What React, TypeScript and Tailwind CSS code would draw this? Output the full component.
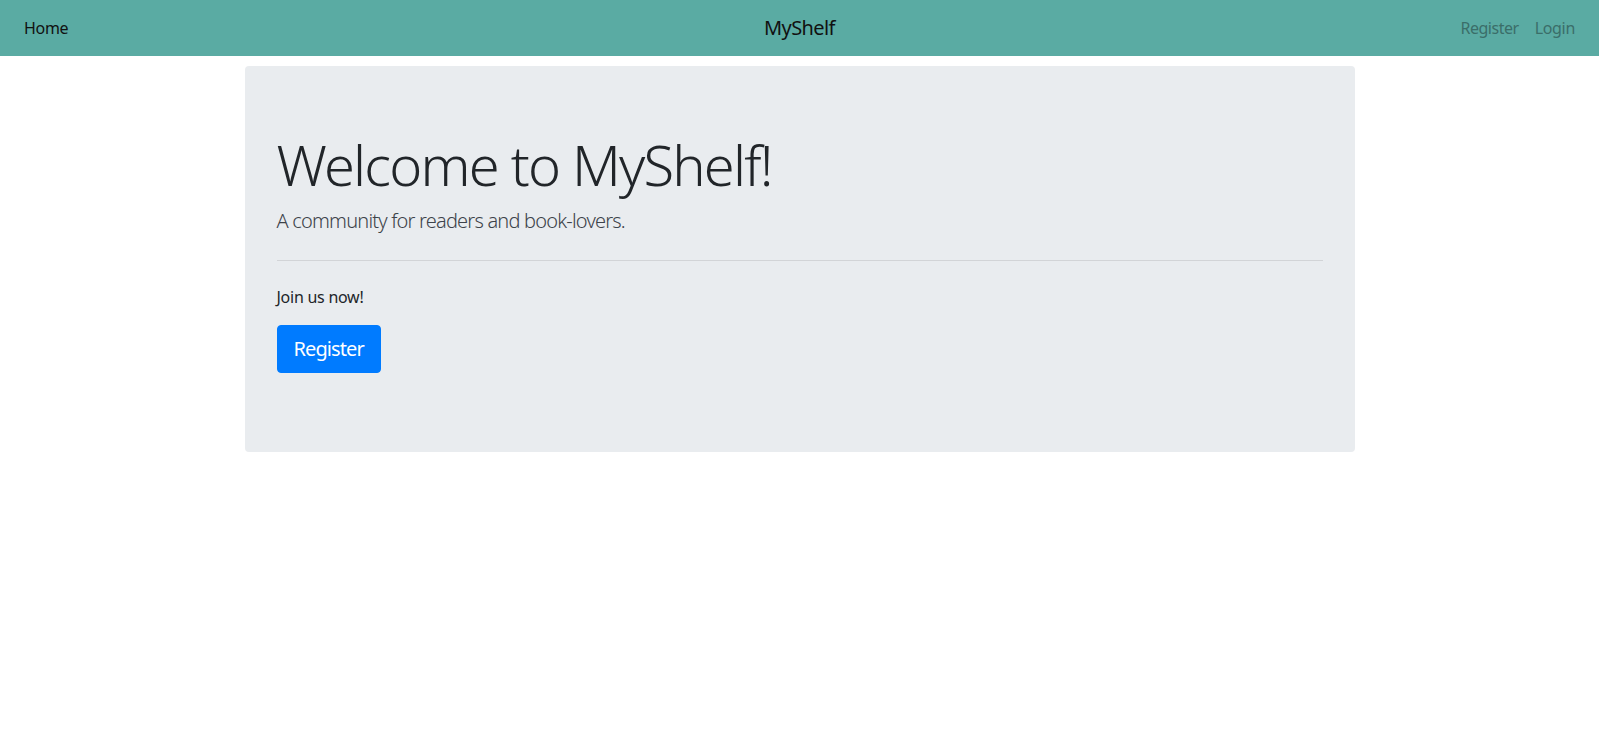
export default function App() {
  return (
    <div className="min-h-screen bg-white text-[#212529]" style={{ fontFamily: '"Noto Sans", "Open Sans", sans-serif' }}>
      {/* Navbar */}
      <nav className="h-[56px] bg-[#5aaba3] grid grid-cols-3 items-center px-4">
        <div className="flex">
          <a className="px-2 text-[16px] tracking-[-0.02em] text-[#111]">Home</a>
        </div>
        <div className="text-center text-[20px] tracking-[-0.03em] text-[#111]">MyShelf</div>
        <div className="flex justify-end">
          <a className="px-2 text-[16px] tracking-[-0.03em] text-[#3a6e69]">Register</a>
          <a className="px-2 text-[16px] tracking-[-0.02em] text-[#3a6e69]">Login</a>
        </div>
      </nav>

      {/* Jumbotron */}
      <div className="mx-auto max-w-[1140px] px-[15px]">
        <div className="mt-[10px] bg-[#e9ecef] rounded-[4px] px-8 pt-[65px] pb-[63px]">
          <h1 className="text-[56px] font-light leading-[1.2] tracking-[-0.032em] mb-2">Welcome to MyShelf!</h1>
          <p className="text-[20px] font-light leading-[30px] tracking-[-0.04em] text-[#3d434a]">A community for readers and book-lovers.</p>
          <hr className="my-6 border-0 border-t border-[#d2d4d7]" />
          <p className="text-[16px] leading-6 tracking-[-0.016em] mb-4">Join us now!</p>
          <div className="mb-4">
            <button className="bg-[#007bff] border border-[#007bff] text-white text-[20px] leading-[30px] tracking-[-0.045em] px-4 py-2 rounded-[4px]">Register</button>
          </div>
        </div>
      </div>
    </div>
  );
}
